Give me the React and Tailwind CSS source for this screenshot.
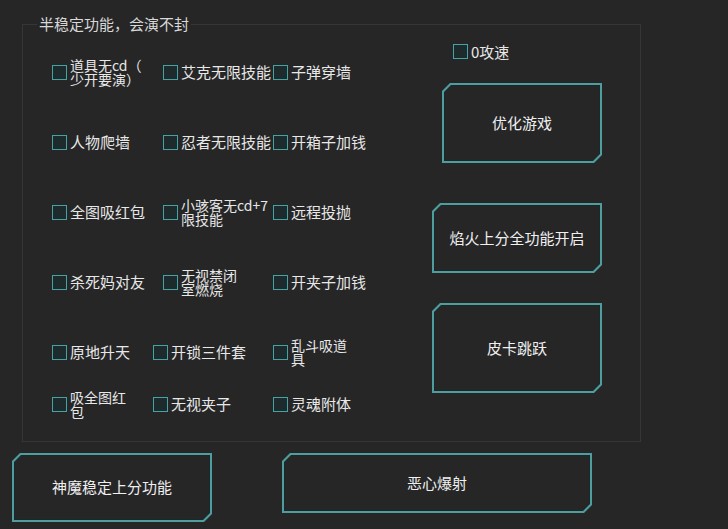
const rows = [
  {
    h: 'h-[70px]',
    cells: [
      { w: 'w-[111px]', lines: ['道具无cd（', '少开要演）'] },
      { w: 'w-[110px]', lines: ['艾克无限技能'] },
      { w: 'w-[120px]', lines: ['子弹穿墙'] },
    ],
  },
  {
    h: 'h-[70px]',
    cells: [
      { w: 'w-[111px]', lines: ['人物爬墙'] },
      { w: 'w-[110px]', lines: ['忍者无限技能'] },
      { w: 'w-[120px]', lines: ['开箱子加钱'] },
    ],
  },
  {
    h: 'h-[70px]',
    cells: [
      { w: 'w-[111px]', lines: ['全图吸红包'] },
      { w: 'w-[110px]', lines: ['小骇客无cd+7', '限技能'] },
      { w: 'w-[120px]', lines: ['远程投抛'] },
    ],
  },
  {
    h: 'h-[70px]',
    cells: [
      { w: 'w-[111px]', lines: ['杀死妈对友'] },
      { w: 'w-[110px]', lines: ['无视禁闭', '室燃烧'] },
      { w: 'w-[120px]', lines: ['开夹子加钱'] },
    ],
  },
  {
    h: 'h-[70px]',
    cells: [
      { w: 'w-[101px]', lines: ['原地升天'] },
      { w: 'w-[120px]', lines: ['开锁三件套'] },
      { w: 'w-[120px]', lines: ['乱斗吸道', '具'] },
    ],
  },
  {
    h: 'h-[34px]',
    cells: [
      { w: 'w-[101px]', lines: ['吸全图红', '包'] },
      { w: 'w-[120px]', lines: ['无视夹子'] },
      { w: 'w-[120px]', lines: ['灵魂附体'] },
    ],
  },
];

function Check({ lines, className = '' }) {
  const wrapped = lines.length > 1;
  return (
    <label className={`flex items-center ${className}`}>
      <span className="h-[15px] w-[15px] shrink-0 border-[1.5px] border-[#45a3a3] bg-[#1d2b2c]" />
      <span
        className={`ml-[3px] whitespace-nowrap text-[#e8e8e8] ${
          wrapped ? 'text-[14px] leading-[14px]' : 'text-[15px] leading-[18px]'
        }`}
      >
        {lines.map((line) => (
          <span key={line} className="block">
            {line}
          </span>
        ))}
      </span>
    </label>
  );
}

// WinForms-style button with clipped top-left and bottom-right corners
function CutButton({ label, className = '' }) {
  return (
    <button
      className={`bg-[#4f9d9d] p-[2px] [clip-path:polygon(8px_0,100%_0,100%_calc(100%_-_8px),calc(100%_-_8px)_100%,0_100%,0_8px)] ${className}`}
    >
      <div className="h-full w-full bg-[#1c272c] p-px [clip-path:polygon(7px_0,100%_0,100%_calc(100%_-_7px),calc(100%_-_7px)_100%,0_100%,0_7px)]">
        <div className="flex h-full w-full items-center justify-center bg-[#262627] text-[15px] text-[#f0f0f0] [clip-path:polygon(6px_0,100%_0,100%_calc(100%_-_6px),calc(100%_-_6px)_100%,0_100%,0_6px)]">
          {label}
        </div>
      </div>
    </button>
  );
}

export default function App() {
  return (
    <div className="h-[529px] w-[728px] overflow-hidden bg-[#262627] pl-[22px] pt-[24px] font-['Microsoft_YaHei','Noto_Sans_CJK_SC',sans-serif]">
      {/* group box */}
      <div className="relative flex h-[418px] w-[619px] border border-[#363637]">
        <span className="absolute -top-[9px] left-[14px] bg-[#262627] px-[2px] text-[15px] leading-[16px] text-[#d8d8d8]">
          半稳定功能，会演不封
        </span>

        <div className="w-[409px] pl-[29px] pt-[12px]">
          {rows.map((row, i) => (
            <div key={i} className={`flex items-center ${row.h}`}>
              {row.cells.map((cell) => (
                <Check key={cell.lines[0]} lines={cell.lines} className={cell.w} />
              ))}
            </div>
          ))}
        </div>

        <div className="flex w-[170px] flex-col pt-[19px]">
          <Check lines={['0攻速']} className="ml-[21px] h-[15px]" />
          <CutButton label="优化游戏" className="ml-[10px] mt-[24px] h-[80px] w-[160px]" />
          <CutButton label="焰火上分全功能开启" className="mt-[40px] h-[70px] w-[170px]" />
          <CutButton label="皮卡跳跃" className="mt-[30px] h-[90px] w-[170px]" />
        </div>
      </div>

      <div className="-ml-[10px] mt-[11px] flex gap-[70px]">
        <CutButton label="神魔稳定上分功能" className="h-[69px] w-[200px]" />
        <CutButton label="恶心爆射" className="h-[60px] w-[310px]" />
      </div>
    </div>
  );
}
